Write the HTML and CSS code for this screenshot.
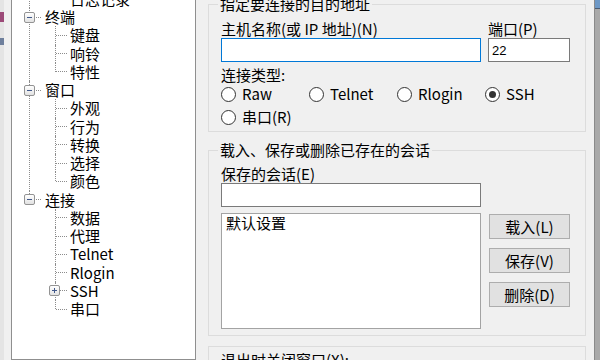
FILE: index.html
```html
<!DOCTYPE html>
<html lang="zh-CN">
<head>
  <meta charset="UTF-8" />
  <title>PuTTY 配置</title>
  <link rel="stylesheet" href="styles.css">
</head>
<body>
  <div class="screen">
    <div class="edge-left">
      <i class="mark mark-red"></i>
      <i class="mark mark-blue"></i>
    </div>

    <div class="tree-panel">
      <ul class="tree">
        <li>
          <div class="row"><span class="box"></span><span class="link"></span><span class="label">会话</span></div>
          <ul>
            <li><div class="row"><span class="link"></span><span class="label">日志记录</span></div></li>
          </ul>
        </li>
        <li>
          <div class="row"><span class="box"></span><span class="link"></span><span class="label">终端</span></div>
          <ul>
            <li><div class="row"><span class="link"></span><span class="label">键盘</span></div></li>
            <li><div class="row"><span class="link"></span><span class="label">响铃</span></div></li>
            <li><div class="row"><span class="link"></span><span class="label">特性</span></div></li>
          </ul>
        </li>
        <li>
          <div class="row"><span class="box"></span><span class="link"></span><span class="label">窗口</span></div>
          <ul>
            <li><div class="row"><span class="link"></span><span class="label">外观</span></div></li>
            <li><div class="row"><span class="link"></span><span class="label">行为</span></div></li>
            <li><div class="row"><span class="link"></span><span class="label">转换</span></div></li>
            <li><div class="row"><span class="link"></span><span class="label">选择</span></div></li>
            <li><div class="row"><span class="link"></span><span class="label">颜色</span></div></li>
          </ul>
        </li>
        <li>
          <div class="row"><span class="box"></span><span class="link"></span><span class="label">连接</span></div>
          <ul>
            <li><div class="row"><span class="link"></span><span class="label">数据</span></div></li>
            <li><div class="row"><span class="link"></span><span class="label">代理</span></div></li>
            <li><div class="row"><span class="link"></span><span class="label">Telnet</span></div></li>
            <li><div class="row"><span class="link"></span><span class="label">Rlogin</span></div></li>
            <li><div class="row"><span class="box plus"></span><span class="link"></span><span class="label">SSH</span></div></li>
            <li><div class="row"><span class="link"></span><span class="label">串口</span></div></li>
          </ul>
        </li>
      </ul>
    </div>

    <div class="config">
      <div class="group group-host">
        <div class="group-title">指定要连接的目的地址</div>
        <div class="host-row">
          <div class="host-col">
            <label class="field-label" for="host">主机名称(或 IP 地址)(N)</label>
            <input type="text" id="host" class="textbox focused" />
          </div>
          <div class="port-col">
            <label class="field-label" for="port">端口(P)</label>
            <input type="text" id="port" class="textbox port" value="22" />
          </div>
        </div>
        <div class="field-label type-label">连接类型:</div>
        <div class="radio-row">
          <span class="opt"><span class="radio"></span>Raw</span>
          <span class="opt"><span class="radio"></span>Telnet</span>
          <span class="opt"><span class="radio"></span>Rlogin</span>
          <span class="opt"><span class="radio checked"></span>SSH</span>
        </div>
        <div class="radio-row second">
          <span class="opt"><span class="radio"></span>串口(R)</span>
        </div>
      </div>

      <div class="group group-sessions">
        <div class="group-title">载入、保存或删除已存在的会话</div>
        <label class="field-label saved-label" for="saved">保存的会话(E)</label>
        <input type="text" id="saved" class="textbox saved" />
        <div class="session-row">
          <div class="listbox">
            <div class="list-item">默认设置</div>
          </div>
          <div class="buttons">
            <button>载入(L)</button>
            <button>保存(V)</button>
            <button>删除(D)</button>
          </div>
        </div>
      </div>

      <div class="group group-exit">
        <div class="field-label exit-label">退出时关闭窗口(X):</div>
      </div>
    </div>

    <div class="edge-right"><div class="edge-cap"></div></div>
  </div>
</body>
</html>
```

FILE: styles.css
```css
html, body {
  margin: 0;
  padding: 0;
}
body {
  font-family: "Noto Sans CJK SC", "Noto Sans", sans-serif;
  font-size: 15px;
  color: #000;
  background-color: #f0f0f0;
}
.screen {
  display: flex;
  width: 600px;
  height: 360px;
  overflow: hidden;
  background-color: #f0f0f0;
}

/* window edges peeking in at the sides */
.edge-left {
  width: 4px;
  background-color: #e4e4e4;
  display: flex;
  flex-direction: column;
}
.mark {
  display: block;
  width: 4px;
}
.mark-red {
  height: 10px;
  margin-top: 12px;
  background-color: #9c4a78;
}
.mark-blue {
  height: 7px;
  margin-top: 16px;
  background-color: #6e7f9c;
}
.edge-right {
  width: 6px;
  margin-left: 8px;
  border-left: 1px solid #8a8a8a;
  background-color: #a9a9a9;
  box-sizing: border-box;
}
.edge-cap {
  height: 8px;
  background-color: #6d98c6;
  border-bottom: 1px solid #4a5a70;
}

/* category tree */
.tree-panel {
  width: 185px;
  margin-left: 7px;
  box-sizing: border-box;
  border: 1px solid #8f8f8f;
  border-top: none;
  background-color: #fff;
  overflow: hidden;
}
.tree, .tree ul {
  list-style: none;
  margin: 0;
  padding: 0;
}
.tree {
  margin-top: -28.5px;
}
.tree li {
  position: relative;
}
.tree > li::before {
  content: "";
  position: absolute;
  left: 17px;
  top: 0;
  bottom: 0;
  border-left: 1px dotted #8c8c8c;
}
.tree > li:last-child::before {
  bottom: auto;
  height: 9px;
}
.tree ul > li::before {
  content: "";
  position: absolute;
  left: 43px;
  top: 0;
  bottom: 0;
  border-left: 1px dotted #8c8c8c;
}
.tree ul > li:last-child::before {
  bottom: auto;
  height: 9px;
}
.row {
  display: flex;
  align-items: center;
  height: 18.25px;
  line-height: 18px;
  white-space: nowrap;
}
.box {
  position: relative;
  z-index: 1;
  width: 11px;
  height: 11px;
  margin-left: 12px;
  box-sizing: border-box;
  border: 1px solid #939393;
  border-radius: 2px;
  background: linear-gradient(#ffffff, #e2e2e2);
}
.box::before {
  content: "";
  position: absolute;
  left: 2px;
  right: 2px;
  top: 4px;
  height: 1px;
  background-color: #41588a;
}
.box.plus::after {
  content: "";
  position: absolute;
  top: 2px;
  bottom: 2px;
  left: 4px;
  width: 1px;
  background-color: #41588a;
}
.link {
  width: 5px;
  margin-left: 1px;
  border-top: 1px dotted #8c8c8c;
}
.label {
  margin-left: 4px;
}
.tree ul .link {
  width: 11px;
  margin-left: 44px;
}
.tree ul .label {
  margin-left: 3px;
}
.tree ul .box {
  margin-left: 37px;
}
.tree ul .box + .link {
  width: 7px;
  margin-left: 0;
}

/* right-hand settings */
.config {
  width: 378px;
  margin-left: 12px;
}
.group {
  border: 1px solid #dcdcdc;
  padding: 0 12px;
}
.group-title {
  display: table;
  margin: -10px 0 0 -3px;
  padding: 0 2px;
  line-height: 18px;
  background-color: #f0f0f0;
}
.field-label {
  display: block;
  line-height: 18px;
  white-space: nowrap;
}
.group-host {
  margin-top: 4px;
  padding-bottom: 5px;
}
.host-row {
  display: flex;
  gap: 7px;
  margin-top: 7px;
}
.host-col {
  width: 260px;
}
.port-col {
  width: 82px;
}
.textbox {
  display: block;
  width: 100%;
  height: 24px;
  box-sizing: border-box;
  margin: 0;
  padding: 0 3px;
  border: 1px solid #7a7a7a;
  background-color: #fff;
  font-family: "Liberation Sans", Arial, sans-serif;
  font-size: 13px;
  color: #000;
  outline: none;
}
.textbox.focused {
  border-color: #0078d7;
}
.type-label {
  margin-top: 4px;
}
.radio-row {
  display: flex;
  height: 18px;
  margin-top: 1px;
}
.radio-row.second {
  margin-top: 5px;
}
.opt {
  display: flex;
  align-items: center;
  width: 89px;
  line-height: 18px;
  white-space: nowrap;
}
.radio {
  position: relative;
  width: 15px;
  height: 15px;
  margin-right: 6px;
  box-sizing: border-box;
  border: 1px solid #333;
  border-radius: 50%;
  background-color: #fff;
}
.radio.checked::after {
  content: "";
  position: absolute;
  left: 3px;
  top: 3px;
  width: 7px;
  height: 7px;
  border-radius: 50%;
  background-color: #333;
}

.group-sessions {
  margin-top: 18px;
  padding-bottom: 6px;
}
.saved-label {
  margin-top: 6px;
}
.textbox.saved {
  width: 260px;
}
.session-row {
  display: flex;
  margin-top: 6px;
}
.listbox {
  width: 260px;
  height: 116px;
  box-sizing: border-box;
  border: 1px solid #a3a3a3;
  background-color: #fff;
}
.list-item {
  padding-left: 4px;
  line-height: 18px;
}
.buttons {
  display: flex;
  flex-direction: column;
  gap: 9px;
  width: 81px;
  margin-left: 8px;
  padding-top: 1px;
}
button {
  height: 25px;
  padding: 0;
  border: 1px solid #adadad;
  background-color: #e1e1e1;
  font-family: inherit;
  font-size: 15px;
  line-height: 18px;
  color: #000;
}

.group-exit {
  margin-top: 10px;
  height: 40px;
}
.exit-label {
  margin-top: 4px;
}
```
